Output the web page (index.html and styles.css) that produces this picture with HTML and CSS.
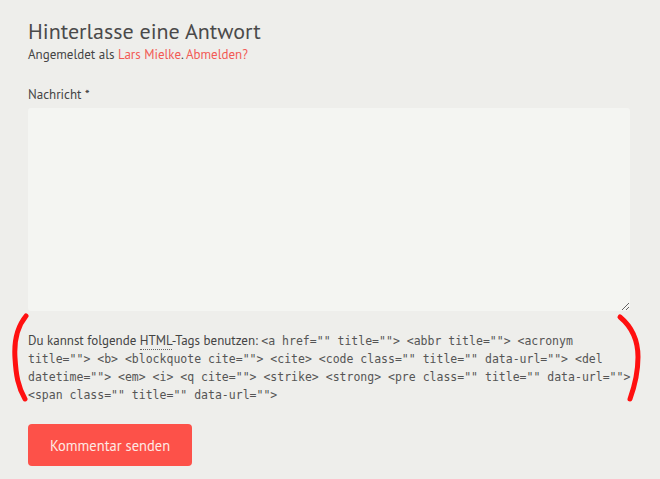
FILE: index.html
```html
<!DOCTYPE html>
<html lang="de">
<head>
<meta charset="utf-8">
<title>Antwort</title>
<link rel="stylesheet" href="styles.css">
</head>
<body>
<div class="respond">
  <h3 class="reply-title">Hinterlasse eine Antwort</h3>
  <p class="logged-in">Angemeldet als <a href="#">Lars Mielke</a>. <a href="#">Abmelden?</a></p>
  <form class="comment-form">
    <label class="field-label" for="comment">Nachricht *</label>
    <textarea id="comment" class="comment-text"></textarea>
    <div class="tags-wrap">
      <p class="allowed-tags">Du kannst folgende <abbr title="HyperText Markup Language">HTML</abbr>-Tags benutzen: <code>&lt;a href="" title=""&gt; &lt;abbr title=""&gt; &lt;acronym title=""&gt; &lt;b&gt; &lt;blockquote cite=""&gt; &lt;cite&gt; &lt;code class="" title="" data-url=""&gt; &lt;del datetime=""&gt; &lt;em&gt; &lt;i&gt; &lt;q cite=""&gt; &lt;strike&gt; &lt;strong&gt; &lt;pre class="" title="" data-url=""&gt; &lt;span class="" title="" data-url=""&gt; </code></p>
      <svg class="mark mark-left" width="20" height="90" viewBox="0 0 20 90">
        <path d="M15 3 C 6 14, 3 30, 4 45 C 5 62, 7 74, 14 86" fill="none" stroke="#ff1010" stroke-width="5" stroke-linecap="round"/>
      </svg>
      <svg class="mark mark-right" width="30" height="90" viewBox="0 0 30 90">
        <path d="M6 4 C 18 14, 24 28, 24 44 C 24 60, 21 72, 16 86" fill="none" stroke="#ff1010" stroke-width="5" stroke-linecap="round"/>
      </svg>
    </div>
    <button type="button" class="submit">Kommentar senden</button>
  </form>
</div>
</body>
</html>
```
FILE: styles.css
```css
html, body {
  margin: 0;
  padding: 0;
  background: #eeeeeb;
}
body {
  font-family: "PT Sans", "Lato", "Noto Sans", sans-serif;
  color: #444;
}
.respond {
  padding: 17px 28px 0 28px;
  width: 604px;
}
.reply-title {
  margin: 0;
  font-size: 22px;
  font-weight: 400;
  line-height: 28px;
  color: #4a4a4a;
}
.logged-in {
  margin: 1px 0 0 0;
  font-size: 13px;
  line-height: 18px;
  color: #444;
}
.logged-in a {
  color: #f25a55;
  text-decoration: none;
}
.comment-form {
  display: flex;
  flex-direction: column;
  align-items: flex-start;
  margin-top: 21px;
}
.field-label {
  font-size: 13px;
  line-height: 20px;
  color: #444;
}
.comment-text {
  display: block;
  margin-top: 3px;
  width: 602px;
  height: 203px;
  box-sizing: border-box;
  border: none;
  border-radius: 3px;
  background: #f4f5f2;
  padding: 8px;
  font: inherit;
  resize: vertical;
}
.tags-wrap {
  position: relative;
  width: 604px;
}
.allowed-tags {
  margin: 21px 0 0 0;
  font-size: 13px;
  line-height: 18px;
  color: #444;
}
.allowed-tags abbr {
  text-decoration: none;
  border-bottom: 1px dotted #666;
}
.allowed-tags code {
  font-family: "DejaVu Sans Mono", monospace;
  font-size: 11.5px;
  line-height: 18px;
  color: #555;
}
.mark {
  position: absolute;
}
.mark-left {
  left: -17px;
  top: 2px;
}
.mark-right {
  left: 586px;
  top: 2px;
}
.submit {
  margin-top: 20px;
  width: 164px;
  height: 42px;
  border: none;
  border-radius: 4px;
  background: #fd5149;
  color: #fde9e4;
  font-family: inherit;
  font-size: 14.5px;
  padding: 0;
  cursor: pointer;
}
```
